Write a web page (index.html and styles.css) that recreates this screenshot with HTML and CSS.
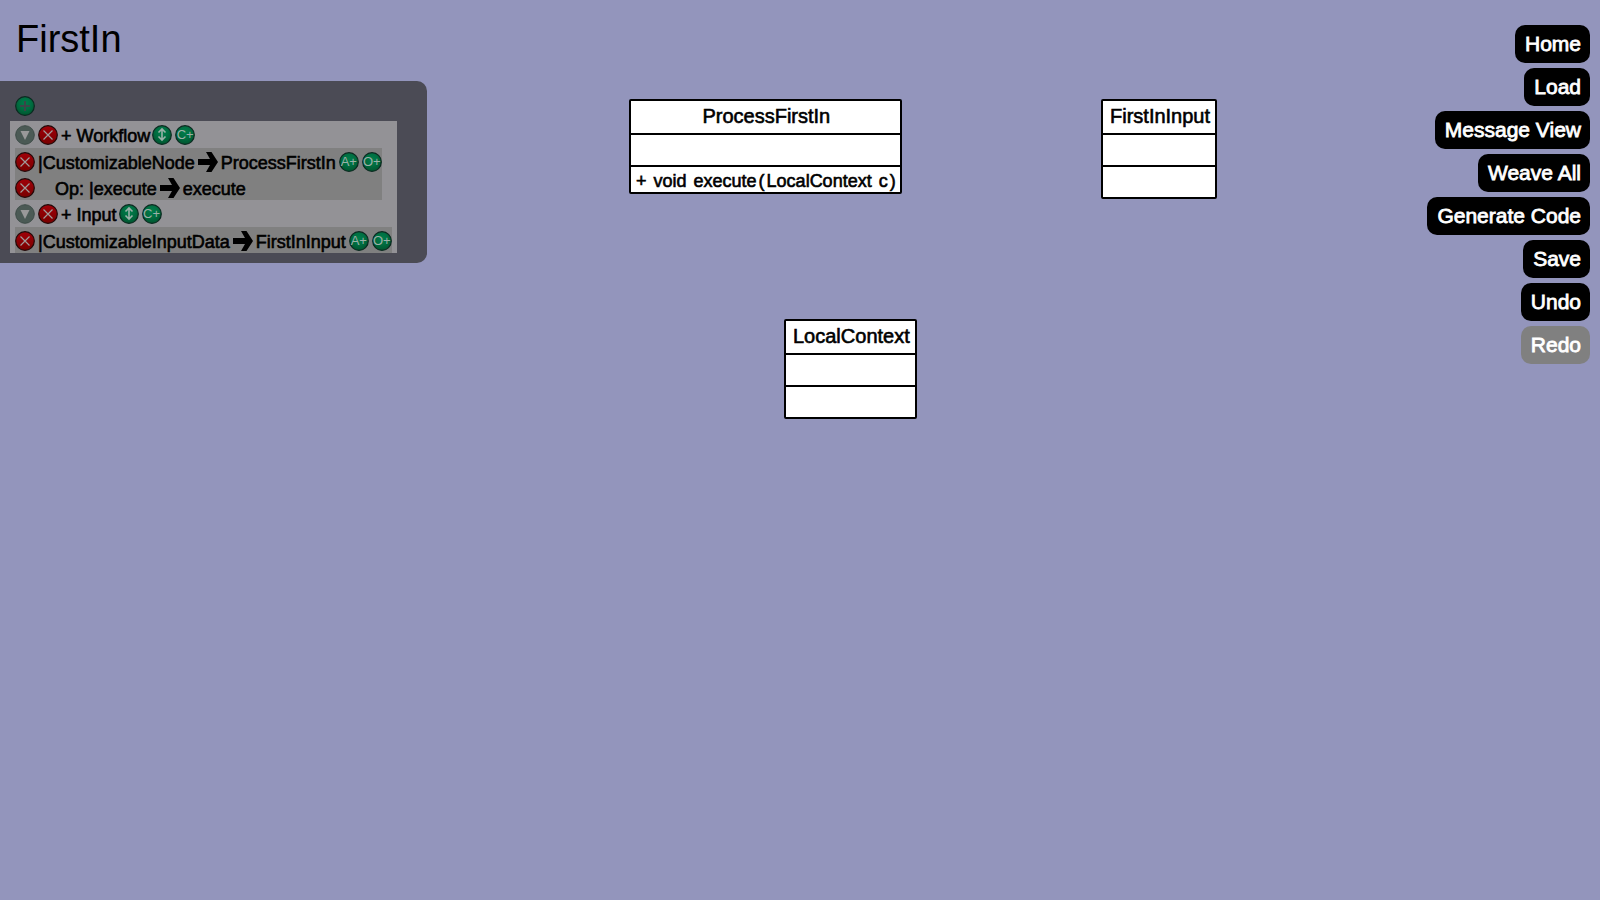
FILE: index.html
```html
<!DOCTYPE html>
<html lang="en">
<head>
<meta charset="utf-8">
<title>FirstIn</title>
<link rel="stylesheet" href="styles.css">
</head>
<body>
<svg class="defs" width="0" height="0" aria-hidden="true">
  <defs>
    <radialGradient id="green" cx="50%" cy="35%" r="65%"><stop offset="0" stop-color="#007d4b"/><stop offset=".5" stop-color="#006e41"/><stop offset="1" stop-color="#00552f"/></radialGradient>
    <linearGradient id="red" x1="0" y1="0" x2="0" y2="1"><stop offset="0" stop-color="#a00008"/><stop offset="1" stop-color="#780000"/></linearGradient>
    <symbol id="add" viewBox="0 0 20 20"><circle cx="10" cy="10" r="9.3" fill="url(#green)" stroke="#0b2a20" stroke-width="1.2"/><path d="M10 5v10M5 10h10" stroke="#3a4648" stroke-width="2"/></symbol>
    <symbol id="fold" viewBox="0 0 20 20"><circle cx="10" cy="10" r="9.3" fill="#4b5a55" stroke="#3e4c48"/><path d="M5.5 6h9L10 15z" fill="#999"/></symbol>
    <symbol id="remove" viewBox="0 0 20 20"><circle cx="10" cy="10" r="9.3" fill="url(#red)" stroke="#220808" stroke-width="1.2"/><path d="M5.500 5.500l9 9M14.500 5.500l-9 9" stroke="#a09a9a" stroke-width="1.2"/></symbol>
    <symbol id="move" viewBox="0 0 20 20"><circle cx="10" cy="10" r="9.3" fill="url(#green)" stroke="#0b2a20" stroke-width="1.2"/><path d="M10 4v11M6.500 7.500L10 4l3.500 3.500M6.500 11.500L10 15l3.500-3.500" fill="none" stroke="#9ab0a8" stroke-width="1.600"/></symbol>
    <symbol id="disc" viewBox="0 0 20 20"><circle cx="10" cy="10" r="9.3" fill="url(#green)" stroke="#0b2a20" stroke-width="1.2"/></symbol>
    <symbol id="arrow" viewBox="0 0 20 20"><path d="M0 7h12L8 0h5.500L20 10l-6.500 10H8l4-7H0z" fill="#000"/></symbol>
  </defs>
</svg>
<header><h1 class="title">FirstIn</h1></header>

<aside class="panel">
  <button class="icon" aria-label="Add"><svg><use href="#add"/></svg></button>
  <div class="list">
    <div class="row head">
      <button class="icon" aria-label="Collapse"><svg><use href="#fold"/></svg></button>
      <button class="icon" aria-label="Remove"><svg><use href="#remove"/></svg></button>
      <span>+ Workflow</span>
      <button class="icon" aria-label="Move"><svg><use href="#move"/></svg></button>
      <button class="icon">C+<svg><use href="#disc"/></svg></button>
    </div>
    <div class="group">
      <div class="row">
        <button class="icon" aria-label="Remove"><svg><use href="#remove"/></svg></button>
        <span>|CustomizableNode</span><svg class="arrow"><use href="#arrow"/></svg><span>ProcessFirstIn</span>
        <button class="icon">A+<svg><use href="#disc"/></svg></button>
        <button class="icon">O+<svg><use href="#disc"/></svg></button>
      </div>
      <div class="row">
        <button class="icon" aria-label="Remove"><svg><use href="#remove"/></svg></button>
        <span class="op">Op: |execute</span><svg class="arrow"><use href="#arrow"/></svg><span>execute</span>
      </div>
    </div>
    <div class="row head">
      <button class="icon" aria-label="Collapse"><svg><use href="#fold"/></svg></button>
      <button class="icon" aria-label="Remove"><svg><use href="#remove"/></svg></button>
      <span>+ Input</span>
      <button class="icon" aria-label="Move"><svg><use href="#move"/></svg></button>
      <button class="icon">C+<svg><use href="#disc"/></svg></button>
    </div>
    <div class="group">
      <div class="row">
        <button class="icon" aria-label="Remove"><svg><use href="#remove"/></svg></button>
        <span>|CustomizableInputData</span><svg class="arrow"><use href="#arrow"/></svg><span>FirstInInput</span>
        <button class="icon">A+<svg><use href="#disc"/></svg></button>
        <button class="icon">O+<svg><use href="#disc"/></svg></button>
      </div>
    </div>
  </div>
</aside>

<main>
  <section class="class process">
    <h2>ProcessFirstIn</h2>
    <div class="part"></div>
    <div class="part method"><span>+</span><span>void</span><span>execute</span><span class="paren">(</span><span>LocalContext</span><span>c</span><span class="paren">)</span></div>
  </section>
  <section class="class input"><h2>FirstInInput</h2><div class="part"></div><div class="part"></div></section>
  <section class="class context"><h2>LocalContext</h2><div class="part"></div><div class="part"></div></section>
</main>

<nav class="menu">
  <button>Home</button>
  <button>Load</button>
  <button>Message View</button>
  <button>Weave All</button>
  <button>Generate Code</button>
  <button>Save</button>
  <button>Undo</button>
  <button disabled>Redo</button>
</nav>
</body>
</html>
```
FILE: styles.css
```css
* { box-sizing: border-box; }
body {
  margin: 0;
  min-height: 100vh;
  background: #9395bc;
  color: #000;
  font-family: "Liberation Sans", Arial, sans-serif;
  overflow: hidden;
}
button {
  border: 0;
  padding: 0;
  font-family: inherit;
  cursor: pointer;
}
.defs { position: absolute; }
.title {
  margin: 0;
  padding: 17px 16px 20px;
  font-size: 38px;
  font-weight: 400;
  line-height: 44px;
}

/* Weaving panel */
.panel {
  width: fit-content;
  padding: 15px 30px 10px 10px;
  border-radius: 0 10px 10px 0;
  background: #4b4b55;
}
.panel > .icon { margin-left: 5px; }
.list {
  margin-top: 5px;
  padding: 0 5px;
  background: #939296;
}
.group {
  width: fit-content;
  background: #808080;
}
.row {
  display: flex;
  align-items: flex-start;
  gap: 3px;
  height: 26px;
  padding-top: 4px;
  font-size: 18px;
  line-height: 22px;
  white-space: nowrap;
  -webkit-text-stroke: 0.6px #000;
}
.head { height: 27px; }
.head span { margin-right: -1px; }
.icon {
  display: grid;
  place-items: center;
  position: relative;
  isolation: isolate;
  width: 20px;
  height: 20px;
  border-radius: 50%;
  background: none;
  color: #9ab0a8;
  font-size: 13px;
  line-height: 20px;
  -webkit-text-stroke: 0;
}
.icon svg {
  position: absolute;
  inset: 0;
  z-index: -1;
  width: 20px;
  height: 20px;
}
.arrow {
  width: 20px;
  height: 20px;
}
.op { margin-left: 17px; }

/* Class diagram: free canvas */
.class {
  position: absolute;
  border: 2px solid #000;
  border-radius: 2px;
  background: #fff;
}
.process { left: 629px; top: 99px; }
.input { left: 1101px; top: 99px; }
.context { left: 784px; top: 319px; }
.class h2 {
  margin: 0;
  padding: 0 5px 2px 7px;
  font-size: 20px;
  font-weight: 400;
  line-height: 30px;
  text-align: center;
  -webkit-text-stroke: 0.6px #000;
}
.part {
  min-height: 32px;
  border-top: 2px solid #000;
}
.method {
  display: flex;
  gap: 7px;
  min-height: 0;
  padding: 4px 4px 0 5px;
  font-size: 18px;
  line-height: 21px;
  -webkit-text-stroke: 0.6px #000;
}
.paren { margin: 0 -5px; }
.paren:last-child { margin-right: 0; }

/* Commands */
.menu {
  position: absolute;
  top: 25px;
  right: 10px;
  display: flex;
  flex-direction: column;
  align-items: flex-end;
  gap: 5px;
}
.menu button {
  padding: 7px 9px 7px 10px;
  border-radius: 10px;
  background: #000;
  color: #fff;
  font-size: 21px;
  line-height: 24px;
  -webkit-text-stroke: 0.8px #fff;
}
.menu button:disabled { background: #808080; }
```
